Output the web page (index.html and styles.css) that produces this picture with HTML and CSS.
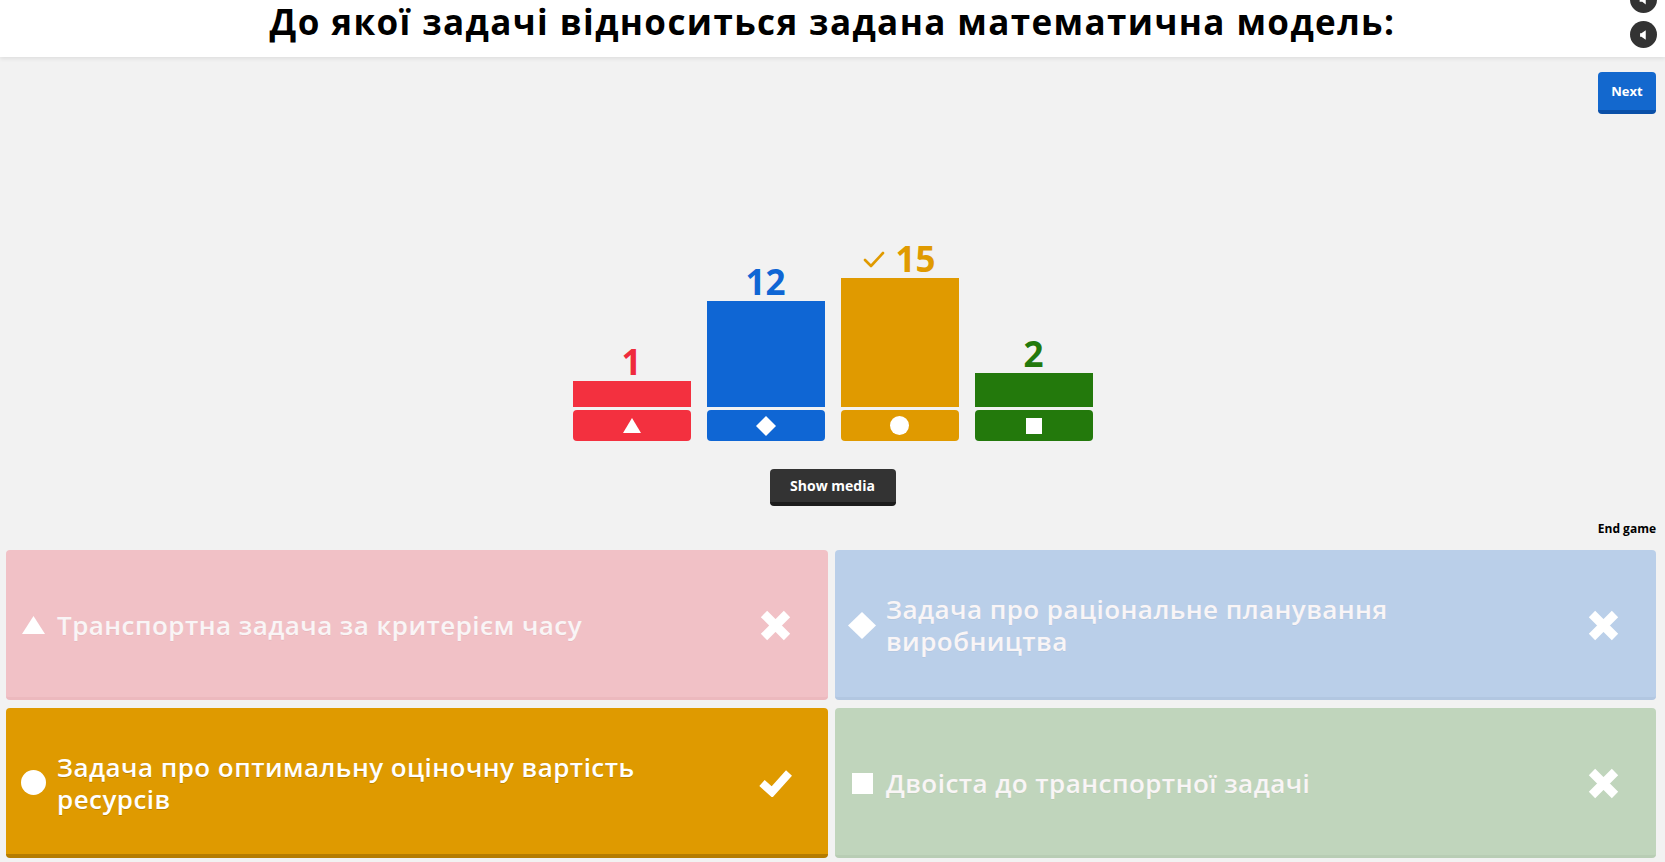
FILE: index.html
```html
<!DOCTYPE html>
<html lang="uk">
<head>
<meta charset="utf-8">
<title>Kahoot question results</title>
<link rel="stylesheet" href="styles.css">
</head>
<body>
<div class="page">
  <header class="header">
    <h1 class="title">До якої задачі відноситься задана математична модель:</h1>
    <div class="corner-icons">
      <span class="round-btn round-top">
        <svg viewBox="0 0 16 16" width="14" height="14"><path d="M3 6h3l4-3v10l-4-3H3z" fill="#fff"/></svg>
      </span>
      <span class="round-btn round-bottom">
        <svg viewBox="0 0 16 16" width="14" height="14"><path d="M10 2.5v11L5 10H3.5V6H5z" fill="#fff"/></svg>
      </span>
    </div>
  </header>

  <div class="topbar">
    <button class="next-btn">Next</button>
  </div>

  <div class="chart">
    <div class="col c-red">
      <div class="count">1</div>
      <div class="bar bar-red"></div>
      <div class="tag"><svg viewBox="0 0 18 15" width="18" height="15"><polygon points="9,0 18,15 0,15" fill="#fff"/></svg></div>
    </div>
    <div class="col c-blue">
      <div class="count">12</div>
      <div class="bar bar-blue"></div>
      <div class="tag"><svg viewBox="0 0 20 20" width="20" height="20"><polygon points="10,0 20,10 10,20 0,10" fill="#fff"/></svg></div>
    </div>
    <div class="col c-orange">
      <div class="count"><svg class="mini-check" viewBox="0 0 22 18" width="22" height="18"><polyline points="2,9 8,15 20,2" fill="none" stroke="#e09a00" stroke-width="2.6" stroke-linecap="round" stroke-linejoin="round"/></svg><span>15</span></div>
      <div class="bar bar-orange"></div>
      <div class="tag"><svg viewBox="0 0 19 19" width="19" height="19"><circle cx="9.5" cy="9.5" r="9.5" fill="#fff"/></svg></div>
    </div>
    <div class="col c-green">
      <div class="count">2</div>
      <div class="bar bar-green"></div>
      <div class="tag"><svg viewBox="0 0 16 16" width="16" height="16"><rect width="16" height="16" fill="#fff"/></svg></div>
    </div>
  </div>

  <div class="media-row">
    <button class="media-btn">Show media</button>
  </div>

  <div class="end-row">
    <span class="end-game">End game</span>
  </div>

  <div class="answers">
    <div class="card card-red faded">
      <span class="shape"><svg viewBox="0 0 23 18" width="23" height="18"><polygon points="11.5,0 23,18 0,18" fill="#fff"/></svg></span>
      <span class="answer-text">Транспортна задача за критерієм часу</span>
      <span class="mark"><svg viewBox="0 0 33 33" width="33" height="33"><path d="M5 5L28 28M28 5L5 28" stroke="#fff" stroke-width="9" stroke-linecap="butt"/></svg></span>
    </div>
    <div class="card card-blue faded">
      <span class="shape"><svg viewBox="0 0 28 27" width="28" height="27"><polygon points="14,0 28,13.5 14,27 0,13.5" fill="#fff"/></svg></span>
      <span class="answer-text">Задача про раціональне планування виробництва</span>
      <span class="mark"><svg viewBox="0 0 33 33" width="33" height="33"><path d="M5 5L28 28M28 5L5 28" stroke="#fff" stroke-width="9" stroke-linecap="butt"/></svg></span>
    </div>
    <div class="card card-orange">
      <span class="shape"><svg viewBox="0 0 25 25" width="25" height="25"><circle cx="12.5" cy="12.5" r="12.5" fill="#fff"/></svg></span>
      <span class="answer-text">Задача про оптимальну оціночну вартість ресурсів</span>
      <span class="mark"><svg viewBox="0 0 33 29" width="33" height="29"><polyline points="3,15 13,24 30,5" fill="none" stroke="#fff" stroke-width="8"/></svg></span>
    </div>
    <div class="card card-green faded">
      <span class="shape"><svg viewBox="0 0 21 21" width="21" height="21"><rect width="21" height="21" fill="#fff"/></svg></span>
      <span class="answer-text">Двоіста до транспортної задачі</span>
      <span class="mark"><svg viewBox="0 0 33 33" width="33" height="33"><path d="M5 5L28 28M28 5L5 28" stroke="#fff" stroke-width="9" stroke-linecap="butt"/></svg></span>
    </div>
  </div>
</div>
</body>
</html>
```
FILE: styles.css
```css
* { box-sizing: border-box; }
html, body { margin: 0; padding: 0; }
body {
  background: #f2f2f2;
  font-family: "Open Sans", "Noto Sans", sans-serif;
  color: #000;
  overflow: hidden;
}
.page {
  width: 1665px;
  height: 862px;
  display: flex;
  flex-direction: column;
}
.header {
  position: relative;
  height: 57px;
  background: #fff;
  box-shadow: 0 2px 4px rgba(0,0,0,0.08);
  flex: none;
}
.title {
  margin: 0;
  padding-top: 2px;
  text-align: center;
  font-size: 35px;
  font-weight: 700;
  line-height: 40px;
  letter-spacing: 1.4px;
  color: #000;
}
.corner-icons {
  position: absolute;
  right: 8px;
  top: -14px;
  display: flex;
  flex-direction: column;
  gap: 8px;
}
.round-btn {
  width: 27px;
  height: 27px;
  border-radius: 50%;
  background: #333;
  display: flex;
  align-items: center;
  justify-content: center;
}
.topbar {
  display: flex;
  justify-content: flex-end;
  padding: 15px 9px 0 0;
  flex: none;
}
.next-btn {
  width: 58px;
  height: 42px;
  border: 0;
  border-bottom: 4px solid #0b50a8;
  border-radius: 4px;
  background: #1368ce;
  color: #fff;
  font-family: "Open Sans", sans-serif;
  font-weight: 700;
  font-size: 13px;
  padding: 0;
}
.chart {
  height: 327px;
  display: flex;
  justify-content: center;
  align-items: flex-end;
  gap: 16px;
  flex: none;
}
.col {
  width: 118px;
  display: flex;
  flex-direction: column;
  align-items: stretch;
}
.count {
  font-size: 35px;
  font-weight: 700;
  line-height: 35px;
  text-align: center;
  margin-bottom: 2px;
  display: flex;
  justify-content: center;
  align-items: center;
  gap: 10px;
}
.mini-check { margin-top: 2px; }
.bar { margin-bottom: 3px; }
.bar-red { height: 26px; background: #f3303f; }
.bar-blue { height: 106px; background: #0f66d4; }
.bar-orange { height: 129px; background: #e09a00; }
.bar-green { height: 34px; background: #23790c; }
.c-red { color: #ef2b3d; }
.c-blue { color: #0f66d4; }
.c-orange { color: #e09a00; }
.c-green { color: #23790c; }
.tag {
  height: 31px;
  border-radius: 4px;
  display: flex;
  align-items: center;
  justify-content: center;
}
.c-red .tag { background: #f3303f; }
.c-blue .tag { background: #0f66d4; }
.c-orange .tag { background: #e09a00; }
.c-green .tag { background: #23790c; }
.media-row {
  display: flex;
  justify-content: center;
  margin-top: 28px;
  flex: none;
}
.media-btn {
  width: 126px;
  height: 37px;
  border: 0;
  border-bottom: 4px solid #1c1c1c;
  border-radius: 4px;
  background: #333;
  color: #fff;
  font-family: "Open Sans", sans-serif;
  font-weight: 700;
  font-size: 14px;
  padding: 0;
}
.end-row {
  display: flex;
  justify-content: flex-end;
  padding-right: 9px;
  margin-top: 15px;
  flex: none;
}
.end-game {
  font-size: 12px;
  font-weight: 700;
  line-height: 15px;
}
.answers {
  margin-top: 14px;
  padding: 0 9px 0 6px;
  display: grid;
  grid-template-columns: 822px 821px;
  grid-template-rows: 150px 150px;
  column-gap: 7px;
  row-gap: 8px;
  flex: none;
}
.card {
  border-radius: 4px;
  display: flex;
  align-items: center;
  padding: 3px 36px 0 13px;
  color: #fff;
}
.card-red { background: #f1c1c6; border-bottom: 3px solid #ecb9be; }
.card-blue { background: #bacfe9; border-bottom: 3px solid #b2c7e1; }
.card-green { background: #c0d5bc; border-bottom: 3px solid #b8cdb4; }
.card-orange { background: #df9a00; border-bottom: 4px solid #b57c00; }
.shape {
  width: 28px;
  flex: none;
  display: flex;
  align-items: center;
  justify-content: center;
}
.answer-text {
  flex: 1;
  margin-left: 10px;
  font-size: 26px;
  font-weight: 600;
  line-height: 32px;
  letter-spacing: 0.45px;
  padding-right: 100px;
  text-shadow: 0 1px 0 rgba(0,0,0,0.18);
}
.faded .answer-text { color: #f9f5f6; text-shadow: 0 1px 0 rgba(0,0,0,0.05); }
.mark {
  width: 33px;
  flex: none;
  display: flex;
  align-items: center;
  justify-content: center;
}
```
